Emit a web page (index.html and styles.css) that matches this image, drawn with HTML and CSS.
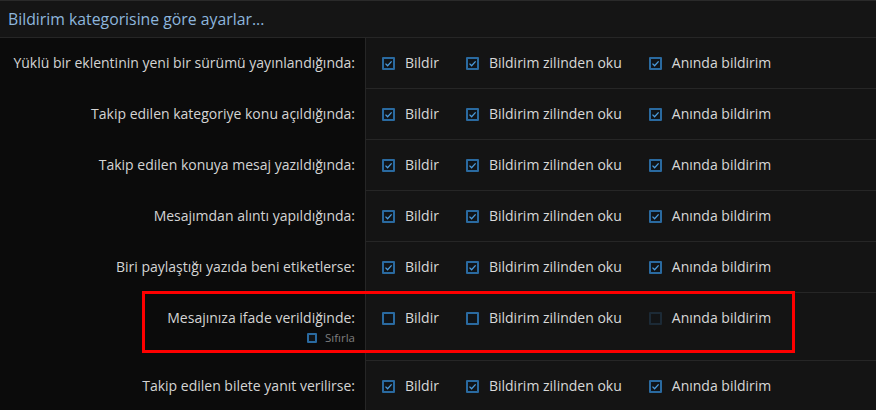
FILE: index.html
```html
<!DOCTYPE html>
<html lang="tr">

<head>
    <meta charset="UTF-8">
    <title>Bildirim ayarları</title>
    <link rel="stylesheet" href="styles.css">
</head>

<body>
    <div class="panel">
        <div class="panel-head">Bildirim kategorisine göre ayarlar...</div>

        <div class="row">
            <div class="row-label">Yüklü bir eklentinin yeni bir sürümü yayınlandığında:</div>
            <div class="row-opts">
                <label class="opt"><span class="cb on"><svg viewBox="0 0 9 9"><polyline points="1.5,4.6 3.6,6.7 7.6,2.4" /></svg></span>Bildir</label>
                <label class="opt"><span class="cb on"><svg viewBox="0 0 9 9"><polyline points="1.5,4.6 3.6,6.7 7.6,2.4" /></svg></span>Bildirim zilinden oku</label>
                <label class="opt"><span class="cb on"><svg viewBox="0 0 9 9"><polyline points="1.5,4.6 3.6,6.7 7.6,2.4" /></svg></span>Anında bildirim</label>
            </div>
        </div>

        <div class="row">
            <div class="row-label">Takip edilen kategoriye konu açıldığında:</div>
            <div class="row-opts">
                <label class="opt"><span class="cb on"><svg viewBox="0 0 9 9"><polyline points="1.5,4.6 3.6,6.7 7.6,2.4" /></svg></span>Bildir</label>
                <label class="opt"><span class="cb on"><svg viewBox="0 0 9 9"><polyline points="1.5,4.6 3.6,6.7 7.6,2.4" /></svg></span>Bildirim zilinden oku</label>
                <label class="opt"><span class="cb on"><svg viewBox="0 0 9 9"><polyline points="1.5,4.6 3.6,6.7 7.6,2.4" /></svg></span>Anında bildirim</label>
            </div>
        </div>

        <div class="row">
            <div class="row-label">Takip edilen konuya mesaj yazıldığında:</div>
            <div class="row-opts">
                <label class="opt"><span class="cb on"><svg viewBox="0 0 9 9"><polyline points="1.5,4.6 3.6,6.7 7.6,2.4" /></svg></span>Bildir</label>
                <label class="opt"><span class="cb on"><svg viewBox="0 0 9 9"><polyline points="1.5,4.6 3.6,6.7 7.6,2.4" /></svg></span>Bildirim zilinden oku</label>
                <label class="opt"><span class="cb on"><svg viewBox="0 0 9 9"><polyline points="1.5,4.6 3.6,6.7 7.6,2.4" /></svg></span>Anında bildirim</label>
            </div>
        </div>

        <div class="row">
            <div class="row-label">Mesajımdan alıntı yapıldığında:</div>
            <div class="row-opts">
                <label class="opt"><span class="cb on"><svg viewBox="0 0 9 9"><polyline points="1.5,4.6 3.6,6.7 7.6,2.4" /></svg></span>Bildir</label>
                <label class="opt"><span class="cb on"><svg viewBox="0 0 9 9"><polyline points="1.5,4.6 3.6,6.7 7.6,2.4" /></svg></span>Bildirim zilinden oku</label>
                <label class="opt"><span class="cb on"><svg viewBox="0 0 9 9"><polyline points="1.5,4.6 3.6,6.7 7.6,2.4" /></svg></span>Anında bildirim</label>
            </div>
        </div>

        <div class="row">
            <div class="row-label">Biri paylaştığı yazıda beni etiketlerse:</div>
            <div class="row-opts">
                <label class="opt"><span class="cb on"><svg viewBox="0 0 9 9"><polyline points="1.5,4.6 3.6,6.7 7.6,2.4" /></svg></span>Bildir</label>
                <label class="opt"><span class="cb on"><svg viewBox="0 0 9 9"><polyline points="1.5,4.6 3.6,6.7 7.6,2.4" /></svg></span>Bildirim zilinden oku</label>
                <label class="opt"><span class="cb on"><svg viewBox="0 0 9 9"><polyline points="1.5,4.6 3.6,6.7 7.6,2.4" /></svg></span>Anında bildirim</label>
            </div>
        </div>

        <div class="row">
            <div class="row-label">
                Mesajınıza ifade verildiğinde:
                <div class="reset"><span class="cb small"></span>Sıfırla</div>
            </div>
            <div class="row-opts">
                <label class="opt"><span class="cb"></span>Bildir</label>
                <label class="opt"><span class="cb"></span>Bildirim zilinden oku</label>
                <label class="opt"><span class="cb off"></span>Anında bildirim</label>
            </div>
        </div>

        <div class="row">
            <div class="row-label">Takip edilen bilete yanıt verilirse:</div>
            <div class="row-opts">
                <label class="opt"><span class="cb on"><svg viewBox="0 0 9 9"><polyline points="1.5,4.6 3.6,6.7 7.6,2.4" /></svg></span>Bildir</label>
                <label class="opt"><span class="cb on"><svg viewBox="0 0 9 9"><polyline points="1.5,4.6 3.6,6.7 7.6,2.4" /></svg></span>Bildirim zilinden oku</label>
                <label class="opt"><span class="cb on"><svg viewBox="0 0 9 9"><polyline points="1.5,4.6 3.6,6.7 7.6,2.4" /></svg></span>Anında bildirim</label>
            </div>
        </div>

        <!-- işaretleme kutusu -->
        <div class="mark"></div>
    </div>
</body>

</html>
```

FILE: styles.css
```css
* {
    padding: 0;
    margin: 0;
    box-sizing: border-box;
}

body {
    background: #0b0b0b;
    font-family: "Open Sans", "Liberation Sans", sans-serif;
    font-size: 14px;
    color: #d8d8d8;
}

.panel {
    position: relative;
    border-top: 1px solid #2a2a2a;
}

.panel-head {
    height: 37px;
    line-height: 36px;
    padding: 0 8px;
    background: #151515;
    border-bottom: 1px solid #262626;
    color: #8db6dd;
    font-size: 15.8px;
}

.row {
    display: grid;
    grid-template-columns: 365px 1fr;
}

.row-label {
    padding: 16px 10px 16px 0;
    line-height: 18px;
    text-align: right;
    color: #d4d4d4;
}

.row-opts {
    display: flex;
    align-items: flex-start;
    gap: 27px;
    padding: 16px;
    background: #141414;
    border-left: 1px solid #262626;
    border-bottom: 1px solid #262626;
    line-height: 18px;
}

.opt {
    display: flex;
    align-items: center;
    gap: 10px;
}

.cb {
    display: inline-flex;
    align-items: center;
    justify-content: center;
    width: 13px;
    height: 13px;
    border: 2px solid #2a6aa0;
    border-radius: 1px;
    background: #101418;
}

.cb svg {
    width: 9px;
    height: 9px;
    fill: none;
    stroke: #4b9bdc;
    stroke-width: 1.3;
}

.cb.off {
    border-color: #1c2a36;
    background: #121416;
}

.cb.small {
    width: 10px;
    height: 10px;
    border-width: 2px;
}

.reset {
    display: flex;
    justify-content: flex-end;
    align-items: center;
    gap: 8px;
    margin-top: 3px;
    font-size: 11.5px;
    line-height: 15px;
    color: #7e7e7e;
}

.mark {
    position: absolute;
    left: 142px;
    top: 290px;
    width: 653px;
    height: 62px;
    border: 3px solid #ff0000;
}
```
